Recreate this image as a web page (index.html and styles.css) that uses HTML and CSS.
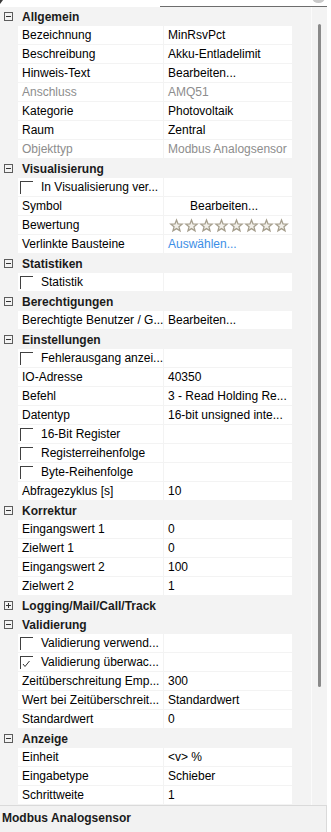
FILE: index.html
```html
<!DOCTYPE html>
<html lang="de">
<head>
    <meta charset="UTF-8">
    <meta name="viewport" content="width=device-width, initial-scale=1.0">
    <title>Eigenschaften</title>
    <link rel="stylesheet" href="styles.css">
</head>
<body>
    <div class="panel">
        <div class="toolbar">
            <span class="toolbar-icon"></span>
            <div class="toolbar-line"><span class="knob"></span></div>
        </div>

        <div class="grid">
            <div class="rows">
                <div class="row group"><span class="toggle"></span>Allgemein</div>
                <div class="row"><div class="cell name">Bezeichnung</div><div class="cell value">MinRsvPct</div></div>
                <div class="row"><div class="cell name">Beschreibung</div><div class="cell value">Akku-Entladelimit</div></div>
                <div class="row"><div class="cell name">Hinweis-Text</div><div class="cell value">Bearbeiten...</div></div>
                <div class="row disabled"><div class="cell name">Anschluss</div><div class="cell value">AMQ51</div></div>
                <div class="row"><div class="cell name">Kategorie</div><div class="cell value">Photovoltaik</div></div>
                <div class="row"><div class="cell name">Raum</div><div class="cell value">Zentral</div></div>
                <div class="row disabled"><div class="cell name">Objekttyp</div><div class="cell value">Modbus Analogsensor</div></div>

                <div class="row group"><span class="toggle"></span>Visualisierung</div>
                <div class="row"><div class="cell name"><span class="check"></span>In Visualisierung ver...</div><div class="cell value"></div></div>
                <div class="row"><div class="cell name">Symbol</div><div class="cell value button-text">Bearbeiten...</div></div>
                <div class="row">
                    <div class="cell name">Bewertung</div>
                    <div class="cell value">
                        <svg class="stars" width="128" height="18" viewBox="0 0 128 18">
                            <defs>
                                <path id="star" d="M0,-6 L1.53,-2.1 L5.71,-1.85 L2.47,0.8 L3.53,4.85 L0,2.6 L-3.53,4.85 L-2.47,0.8 L-5.71,-1.85 L-1.53,-2.1 Z"/>
                            </defs>
                            <use href="#star" x="12.5" y="10"/>
                            <use href="#star" x="27.5" y="10"/>
                            <use href="#star" x="42.5" y="10"/>
                            <use href="#star" x="57.5" y="10"/>
                            <use href="#star" x="72.5" y="10"/>
                            <use href="#star" x="87.5" y="10"/>
                            <use href="#star" x="102.5" y="10"/>
                            <use href="#star" x="117.5" y="10"/>
                        </svg>
                    </div>
                </div>
                <div class="row"><div class="cell name">Verlinkte Bausteine</div><div class="cell value link">Auswählen...</div></div>

                <div class="row group"><span class="toggle"></span>Statistiken</div>
                <div class="row"><div class="cell name"><span class="check"></span>Statistik</div><div class="cell value"></div></div>

                <div class="row group"><span class="toggle"></span>Berechtigungen</div>
                <div class="row"><div class="cell name">Berechtigte Benutzer / G...</div><div class="cell value">Bearbeiten...</div></div>

                <div class="row group"><span class="toggle"></span>Einstellungen</div>
                <div class="row"><div class="cell name"><span class="check"></span>Fehlerausgang anzei...</div><div class="cell value"></div></div>
                <div class="row"><div class="cell name">IO-Adresse</div><div class="cell value">40350</div></div>
                <div class="row"><div class="cell name">Befehl</div><div class="cell value">3 - Read Holding Re...</div></div>
                <div class="row"><div class="cell name">Datentyp</div><div class="cell value">16-bit unsigned inte...</div></div>
                <div class="row"><div class="cell name"><span class="check"></span>16-Bit Register</div><div class="cell value"></div></div>
                <div class="row"><div class="cell name"><span class="check"></span>Registerreihenfolge</div><div class="cell value"></div></div>
                <div class="row"><div class="cell name"><span class="check"></span>Byte-Reihenfolge</div><div class="cell value"></div></div>
                <div class="row"><div class="cell name">Abfragezyklus [s]</div><div class="cell value">10</div></div>

                <div class="row group"><span class="toggle"></span>Korrektur</div>
                <div class="row"><div class="cell name">Eingangswert 1</div><div class="cell value">0</div></div>
                <div class="row"><div class="cell name">Zielwert 1</div><div class="cell value">0</div></div>
                <div class="row"><div class="cell name">Eingangswert 2</div><div class="cell value">100</div></div>
                <div class="row"><div class="cell name">Zielwert 2</div><div class="cell value">1</div></div>

                <div class="row group"><span class="toggle closed"></span>Logging/Mail/Call/Track</div>

                <div class="row group"><span class="toggle"></span>Validierung</div>
                <div class="row"><div class="cell name"><span class="check"></span>Validierung verwend...</div><div class="cell value"></div></div>
                <div class="row">
                    <div class="cell name">
                        <span class="check">
                            <svg width="12" height="12" viewBox="0 0 12 12"><polyline points="2,7 4,9.5 8.5,4" fill="none" stroke="#333" stroke-width="1"/></svg>
                        </span>Validierung überwac...
                    </div>
                    <div class="cell value"></div>
                </div>
                <div class="row"><div class="cell name">Zeitüberschreitung Emp...</div><div class="cell value">300</div></div>
                <div class="row"><div class="cell name">Wert bei Zeitüberschreit...</div><div class="cell value">Standardwert</div></div>
                <div class="row"><div class="cell name">Standardwert</div><div class="cell value">0</div></div>

                <div class="row group"><span class="toggle"></span>Anzeige</div>
                <div class="row"><div class="cell name">Einheit</div><div class="cell value">&lt;v&gt; %</div></div>
                <div class="row"><div class="cell name">Eingabetype</div><div class="cell value">Schieber</div></div>
                <div class="row"><div class="cell name">Schrittweite</div><div class="cell value">1</div></div>
            </div>

            <div class="scrollbar"><div class="thumb"></div></div>
        </div>

        <div class="footer">Modbus Analogsensor</div>
    </div>
</body>
</html>
```

FILE: styles.css
```css
* {
    box-sizing: border-box;
}

body {
    margin: 0;
    background: #fff;
    font-family: "Segoe UI", "Liberation Sans", Arial, sans-serif;
    font-size: 12px;
    color: #000;
}

.panel {
    width: 327px;
}

/* cut-off toolbar at the top */
.toolbar {
    display: flex;
    height: 7px;
}

.toolbar-icon {
    width: 0;
    height: 0;
    border-top: 4px solid #3a3a3a;
    border-right: 3px solid transparent;
}

.toolbar-line {
    position: relative;
    margin-left: auto;
    width: 167px;
    height: 7px;
    border-bottom: 1px solid #6d6d6d;
}

.toolbar-line .knob {
    position: absolute;
    right: 2px;
    top: -8px;
    width: 13px;
    height: 11px;
    border-radius: 50%;
    background: #c9c9c9;
}

.grid {
    display: flex;
    background: #f3f3f3;
}

.rows {
    width: 311px;
}

.row {
    display: flex;
    height: 19px;
}

.cell {
    height: 18px;
    line-height: 18px;
    background: #fff;
    white-space: nowrap;
    overflow: hidden;
}

.name {
    display: flex;
    align-items: center;
    margin-left: 18px;
    width: 145px;
    padding-left: 4px;
}

.value {
    margin-left: 1px;
    width: 128px;
    padding-left: 4px;
}

.disabled .cell {
    color: #8d8d8d;
}

.button-text {
    padding-left: 26px;
}

.link {
    color: #3c8ee6;
}

.stars {
    display: block;
    margin-left: -4px;
    fill: #f1efe9;
    stroke: #a59e8d;
    stroke-width: 1.3;
}

/* category rows */
.group {
    align-items: center;
    font-weight: bold;
    color: #1b1b1b;
}

.toggle {
    position: relative;
    width: 9px;
    height: 9px;
    margin: 0 9px 0 4px;
    border: 1px solid #5c5c5c;
}

.toggle::before {
    content: "";
    position: absolute;
    left: 1px;
    top: 3px;
    width: 5px;
    height: 1px;
    background: #333;
}

.toggle.closed::after {
    content: "";
    position: absolute;
    left: 3px;
    top: 1px;
    width: 1px;
    height: 5px;
    background: #333;
}

.check {
    flex: none;
    width: 13px;
    height: 13px;
    margin: 1px 8px 0 -2px;
    border-top: 1px solid #404040;
    border-left: 1px solid #404040;
}

.check svg {
    display: block;
}

.scrollbar {
    width: 16px;
    padding: 17px 0 0 6px;
    border-left: 1px solid #fbfbfb;
}

.thumb {
    width: 3px;
    height: 663px;
    border-radius: 2px;
    background: #8a8a8a;
}

.footer {
    height: 27px;
    padding-left: 2px;
    line-height: 25px;
    font-weight: bold;
    color: #1b1b1b;
    background: #f2f2f2;
    border-top: 1px solid #dadada;
    border-right: 1px solid #dadada;
}
```
